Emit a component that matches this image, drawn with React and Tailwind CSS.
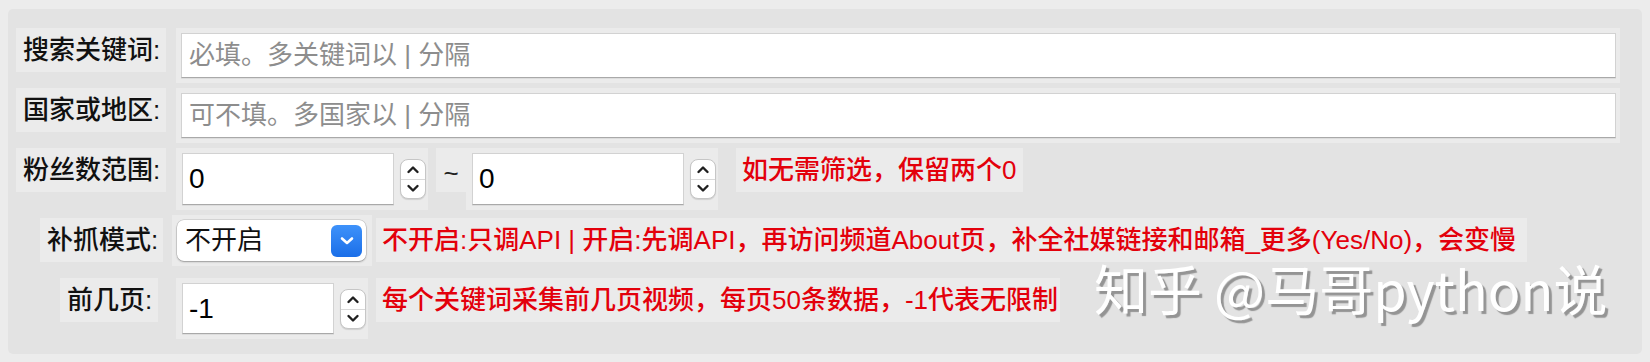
import React from "react";

function Spinner() {
  return (
    <div className="w-[26px] h-[40px] rounded-[8px] bg-white border border-[#c6c6c6] shadow-[0_1px_1px_rgba(0,0,0,0.12)] flex flex-col overflow-hidden">
      <div className="flex-1 flex items-center justify-center border-b border-[#d9d9d9]">
        <svg width="14" height="9" viewBox="0 0 14 9">
          <path d="M2.5 7 L7 2.5 L11.5 7" stroke="#1f1f1f" strokeWidth="2.4" fill="none" strokeLinecap="round" strokeLinejoin="round" />
        </svg>
      </div>
      <div className="flex-1 flex items-center justify-center">
        <svg width="14" height="9" viewBox="0 0 14 9">
          <path d="M2.5 2 L7 6.5 L11.5 2" stroke="#1f1f1f" strokeWidth="2.4" fill="none" strokeLinecap="round" strokeLinejoin="round" />
        </svg>
      </div>
    </div>
  );
}

function Label({ children, className = "" }) {
  return (
    <div className={"h-[44px] bg-[#ebebeb] flex items-center px-[7px] text-[26px] font-medium text-[#111] whitespace-nowrap " + className}>
      {children}
    </div>
  );
}

function Red({ children, className = "" }) {
  return (
    <div className={"h-[44px] bg-[#ebebeb] flex items-center px-[6px] text-[26px] font-medium text-[#e3000b] whitespace-nowrap " + className}>
      {children}
    </div>
  );
}

const inputCls =
  "bg-white border border-[#d2d2d2] border-b-[#a9a9a9] shadow-[0_1px_0_rgba(0,0,0,0.06)] flex items-center";

export default function App() {
  return (
    <div className="relative w-[1650px] h-[362px] bg-[#ececec] pt-[9px] pl-[8px] font-['Liberation_Sans','Noto_Sans_CJK_SC',sans-serif]">
      <div className="w-[1634px] h-[345px] rounded-[5px] bg-[#e3e3e3] pt-[19px] pl-[8px]">
        {/* Row 1 */}
        <div className="flex items-start mb-[5px]">
          <Label className="w-[150px]">搜索关键词:</Label>
          <div className="ml-[10px] w-[1444px] h-[55px] bg-[#ebebeb] pt-[5px] pl-[5px]">
            <div className={inputCls + " w-[1435px] h-[45px] pl-[7px] text-[26px] text-[#8d8d8d]"}>必填。多关键词以 | 分隔</div>
          </div>
        </div>
        {/* Row 2 */}
        <div className="flex items-start mb-[5px]">
          <Label className="w-[150px]">国家或地区:</Label>
          <div className="ml-[10px] w-[1444px] h-[55px] bg-[#ebebeb] pt-[5px] pl-[5px]">
            <div className={inputCls + " w-[1435px] h-[45px] pl-[7px] text-[26px] text-[#8d8d8d]"}>可不填。多国家以 | 分隔</div>
          </div>
        </div>
        {/* Row 3 */}
        <div className="flex items-start mb-[5px]">
          <Label className="w-[150px]">粉丝数范围:</Label>
          <div className="ml-[10px] w-[252px] h-[62px] bg-[#ebebeb] pt-[5px] pl-[6px] flex items-start gap-[6px]">
            <div className={inputCls + " w-[212px] h-[52px] pl-[6px] text-[28px] text-black"}>0</div>
            <div className="mt-[6px]"><Spinner /></div>
          </div>
          <div className="ml-[8px] w-[30px] h-[44px] bg-[#ebebeb] flex items-center justify-center pt-[6px] text-[26px] text-[#222]">~</div>
          <div className="w-[252px] h-[62px] bg-[#ebebeb] pt-[5px] pl-[6px] flex items-start gap-[6px]">
            <div className={inputCls + " w-[212px] h-[52px] pl-[6px] text-[28px] text-black"}>0</div>
            <div className="mt-[6px]"><Spinner /></div>
          </div>
          <Red className="ml-[18px] w-[287px]">如无需筛选，保留两个0</Red>
        </div>
        {/* Row 4 */}
        <div className="flex items-start h-[58px] mb-[5px]">
          <Label className="ml-[24px] w-[123px] mt-[3px]">补抓模式:</Label>
          <div className="ml-[9px] w-[200px] h-[51px] bg-[#ebebeb] pt-[5px] pl-[5px]">
            <div className="w-[189px] h-[41px] rounded-[7px] bg-white shadow-[0_0_0_0.5px_rgba(0,0,0,0.18),0_1px_2px_rgba(0,0,0,0.28)] flex items-center pl-[8px] pr-[4px]">
              <span className="flex-1 text-[26px] text-[#111]">不开启</span>
              <div className="w-[31px] h-[32px] rounded-[6px] bg-linear-to-b from-[#3e92fa] to-[#1a6ee8] flex items-center justify-center">
                <svg width="16" height="10" viewBox="0 0 16 10">
                  <path d="M3 2.5 L8 7 L13 2.5" stroke="#ffffff" strokeWidth="2.6" fill="none" strokeLinecap="round" strokeLinejoin="round" />
                </svg>
              </div>
            </div>
          </div>
          <Red className="ml-[4px] w-[1151px] mt-[3px]">不开启:只调API | 开启:先调API，再访问频道About页，补全社媒链接和邮箱_更多(Yes/No)，会变慢</Red>
        </div>
        {/* Row 5 */}
        <div className="flex items-start">
          <Label className="ml-[44px] w-[98px]">前几页:</Label>
          <div className="ml-[18px] w-[192px] h-[61px] bg-[#ebebeb] pt-[5px] pl-[6px] flex items-start gap-[6px]">
            <div className={inputCls + " w-[152px] h-[51px] pl-[6px] text-[28px] text-black"}>-1</div>
            <div className="mt-[6px]"><Spinner /></div>
          </div>
          <Red className="ml-[8px] w-[684px]">每个关键词采集前几页视频，每页50条数据，-1代表无限制</Red>
        </div>
      </div>
      <div className="absolute left-[1094px] top-[261px] text-[54px] leading-none text-white whitespace-nowrap font-['Noto_Sans_CJK_SC',sans-serif] [text-shadow:3px_3px_1px_rgba(0,0,0,0.35)]">
        知乎 @马哥python说
      </div>
    </div>
  );
}
